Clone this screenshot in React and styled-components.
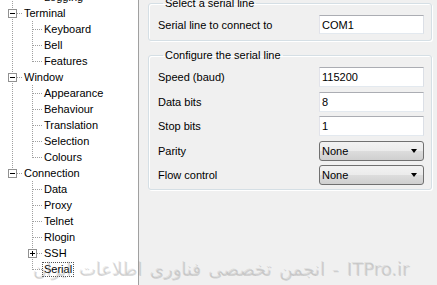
import React from 'react'
import styled, {createGlobalStyle, css} from 'styled-components'

const GlobalStyle = createGlobalStyle`
    html, body {
        margin: 0;
        padding: 0;
        background: #f0f0f0;
    }
    body {
        font-family: "Liberation Sans", Arial, sans-serif;
        font-size: 11px;
        color: #000;
    }
`

const tree = [
    {label: 'Session', hidden: true, open: true, children: [{label: 'Logging'}]},
    {label: 'Terminal', open: true, children: [{label: 'Keyboard'}, {label: 'Bell'}, {label: 'Features'}]},
    {label: 'Window', open: true, children: [
        {label: 'Appearance'}, {label: 'Behaviour'}, {label: 'Translation'},
        {label: 'Selection'}, {label: 'Colours'},
    ]},
    {label: 'Connection', open: true, children: [
        {label: 'Data'}, {label: 'Proxy'}, {label: 'Telnet'}, {label: 'Rlogin'},
        {label: 'SSH', collapsed: true}, {label: 'Serial', selected: true},
    ]},
]

// flatten the tree into rows with the guide pieces for each level
const flatten = (nodes) => nodes.flatMap((node, i) => {
    const last = i === nodes.length - 1
    const head = {
        label: node.label,
        selected: node.selected,
        guides: [{kind: last ? 'elbow' : 'tee', box: node.open ? 'minus' : node.collapsed ? 'plus' : null}],
        hidden: node.hidden,
    }
    const kids = (node.children || []).map((child, j, all) => ({
        label: child.label,
        selected: child.selected,
        guides: [
            {kind: last ? 'blank' : 'pass'},
            {kind: j === all.length - 1 ? 'elbow' : 'tee', box: child.collapsed ? 'plus' : null},
        ],
    }))
    return [head, ...kids]
}).filter(row => !row.hidden)

const vDots = css`
    background-image: linear-gradient(to bottom, #a0a0a0 50%, transparent 50%);
    background-size: 1px 2px;
`
const hDots = css`
    background-image: linear-gradient(to right, #a0a0a0 50%, transparent 50%);
    background-size: 2px 1px;
`

const Page = styled.div`
    position: relative;
    display: flex;
    width: 437px;
    height: 285px;
    overflow: hidden;
`

const TreePanel = styled.div`
    width: 138px;
    flex: none;
    background: #fff;
    border-right: 1px solid #a0a0a0;
    overflow: hidden;
`

const TreeList = styled.div`
    margin-top: -11px;
    padding-left: 2px;
`

const Row = styled.div`
    display: flex;
    align-items: center;
    height: 16px;
`

const Guide = styled.div`
    position: relative;
    width: 20px;
    height: 16px;
    flex: none;
    &::before {
        content: '';
        position: absolute;
        left: 10px;
        top: 0;
        width: 1px;
        height: ${p => p.kind === 'elbow' ? '9px' : '16px'};
        display: ${p => p.kind === 'blank' ? 'none' : 'block'};
        ${vDots}
    }
    &::after {
        content: '';
        position: absolute;
        left: 11px;
        top: 8px;
        width: 9px;
        height: 1px;
        display: ${p => p.kind === 'tee' || p.kind === 'elbow' ? 'block' : 'none'};
        ${hDots}
    }
`

const Expander = styled.span`
    position: absolute;
    left: 6px;
    top: 4px;
    width: 7px;
    height: 7px;
    border: 1px solid #919191;
    background: #fff;
    z-index: 1;
    &::before {
        content: '';
        position: absolute;
        left: 1px;
        top: 3px;
        width: 5px;
        height: 1px;
        background: #000;
    }
    &::after {
        content: '';
        position: absolute;
        left: 3px;
        top: 1px;
        width: 1px;
        height: 5px;
        background: #000;
        display: ${p => p.plus ? 'block' : 'none'};
    }
`

const Label = styled.span`
    padding: 0 1px;
    margin-left: 1px;
    line-height: 13px;
    white-space: nowrap;
    outline: ${p => p.selected ? '1px dotted #555' : 'none'};
`

const Settings = styled.div`
    flex: 1;
    display: flex;
    flex-direction: column;
    gap: 8px;
    padding: 0 5px 0 9px;
`

const Group = styled.fieldset`
    margin: ${p => p.first ? '-3px 0 0' : '0'};
    min-width: 0;
    padding: 6px 7px ${p => p.first ? '6px' : '4px'} 9px;
    border: 1px solid #d5dfe5;
    border-radius: 3px;
    box-shadow: inset 1px 1px 0 #fff, 1px 1px 0 #fff;
    display: flex;
    flex-direction: column;
    gap: 4.5px;
`

const Legend = styled.legend`
    margin-left: 5px;
    padding: 0 2px;
    line-height: 12px;
`

const Field = styled.div`
    display: flex;
    align-items: center;
    justify-content: space-between;
`

const TextBox = styled.div`
    box-sizing: border-box;
    width: 105px;
    height: ${p => p.short ? '19px' : '20px'};
    padding-left: 2px;
    display: flex;
    align-items: center;
    background: #fff;
    border: 1px solid;
    border-color: #abadb3 #dbdfe6 #e3e9ef #e2e3ea;
`

const DropDown = styled.div`
    box-sizing: border-box;
    width: 105px;
    height: 20px;
    padding: 0 6px 0 2px;
    display: flex;
    align-items: center;
    justify-content: space-between;
    border: 1px solid #707070;
    border-radius: 3px;
    background: linear-gradient(#f2f2f2 0%, #ebebeb 50%, #dddddd 50%, #cfcfcf 100%);
`

const Arrow = styled.span`
    width: 0;
    height: 0;
    border-left: 3.5px solid transparent;
    border-right: 3.5px solid transparent;
    border-top: 4px solid #000;
`

const Watermark = styled.div`
    position: absolute;
    right: 27px;
    bottom: 5px;
    font-family: "DejaVu Sans", sans-serif;
    font-size: 18px;
    word-spacing: 2px;
    color: rgba(150, 150, 150, 0.35);
    text-shadow: -1px -1px 0 rgba(120, 120, 120, 0.15);
    white-space: nowrap;
    pointer-events: none;
`

const fields = [
    {label: 'Speed (baud)', value: '115200'},
    {label: 'Data bits', value: '8'},
    {label: 'Stop bits', value: '1'},
    {label: 'Parity', value: 'None', select: true},
    {label: 'Flow control', value: 'None', select: true},
]

export default function App() {
    return (
        <Page>
            <GlobalStyle />
            <TreePanel>
                <TreeList>
                    {flatten(tree).map(row => (
                        <Row key={row.label}>
                            {row.guides.map((g, i) => (
                                <Guide key={i} kind={g.kind}>
                                    {g.box && <Expander plus={g.box === 'plus'} />}
                                </Guide>
                            ))}
                            <Label selected={row.selected}>{row.label}</Label>
                        </Row>
                    ))}
                </TreeList>
            </TreePanel>
            <Settings>
                <Group first>
                    <Legend>Select a serial line</Legend>
                    <Field>
                        <span>Serial line to connect to</span>
                        <TextBox short>COM1</TextBox>
                    </Field>
                </Group>
                <Group>
                    <Legend>Configure the serial line</Legend>
                    {fields.map(f => (
                        <Field key={f.label}>
                            <span>{f.label}</span>
                            {f.select
                                ? <DropDown><span>{f.value}</span><Arrow /></DropDown>
                                : <TextBox>{f.value}</TextBox>}
                        </Field>
                    ))}
                </Group>
            </Settings>
            <Watermark dir="rtl">ITPro.ir - انجمن تخصصی فناوری اطلاعات ایران</Watermark>
        </Page>
    )
}
